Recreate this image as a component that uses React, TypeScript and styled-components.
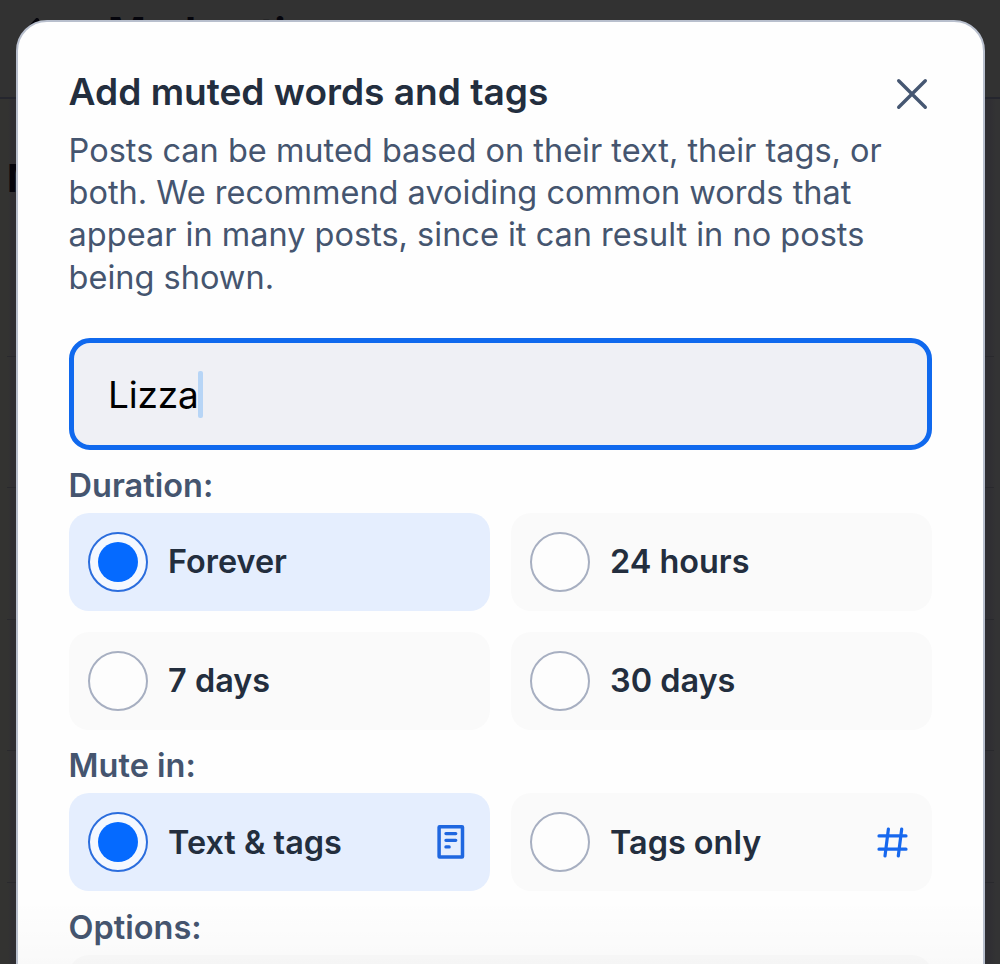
import React from "react";
import styled, { createGlobalStyle } from "styled-components";

const Global = createGlobalStyle`
  * { box-sizing: border-box; }
  html, body { margin: 0; padding: 0; overflow: hidden; }
  body { font-family: Inter, "Liberation Sans", sans-serif; background: #323232; }
`;

const Screen = styled.div`
  position: relative;
  width: 1000px;
  height: 964px;
  overflow: hidden;
  background: linear-gradient(to right, #333331 0, #333331 8px, #302f33 12px, #302f33 990px, #333334 996px);
`;

const PageBehind = styled.div`
  display: flex;
  flex-direction: column;
  height: 964px;
`;

const PageHeader = styled.header`
  display: flex;
  align-items: center;
  gap: 68px;
  height: 99px;
  padding: 0 0 40px 20px;
  border-bottom: 2px solid #25262e;
  color: #05050c;
  background: #323232;
  flex: none;
`;

const BackArrow = styled.svg`
  margin-top: 12px;
`;

const PageTitle = styled.span`
  font-size: 40.5px;
  line-height: 50px;
  padding-top: 8px;
  font-weight: 700;
`;

const PageSection = styled.div`
  flex: none;
  height: 258px;
  margin: 0 6px 0 7px;
  padding-top: 54px;
  font-size: 38px;
  line-height: 50px;
  font-weight: 700;
  color: #05050c;
  border-bottom: 1px solid #29292d;
`;

const PageRow = styled.div`
  flex: none;
  height: 131.4px;
  margin: 0 6px 0 7px;
  border-bottom: 1px solid #29292d;
`;

const Dialog = styled.section`
  position: absolute;
  left: 16px;
  top: 20px;
  width: 969px;
  height: 1100px;
  padding: 50px 51px 50px 50.6px;
  border: 2px solid #b8bfcd;
  border-radius: 31px;
  background: #fefefe;
`;

const TitleRow = styled.div`
  display: flex;
  justify-content: space-between;
  align-items: center;
  height: 44px;
`;

const Title = styled.h1`
  margin: 0;
  padding-bottom: 4px;
  font-size: 37.1px;
  line-height: 44px;
  font-weight: 600;
  letter-spacing: 0;
  color: #232e3e;
  white-space: nowrap;
`;

const CloseButton = styled.button`
  display: flex;
  padding: 0;
  margin: 0 3.4px 0 0;
  border: 0;
  background: none;
  color: #465772;
`;

const Description = styled.p`
  margin: 14px 0 0;
  font-size: 32.5px;
  line-height: 42.2px;
  letter-spacing: 0;
  color: #45556f;
  white-space: nowrap;
`;

const InputBox = styled.div`
  display: flex;
  align-items: center;
  height: 112px;
  margin-top: 39px;
  padding: 0 34.5px;
  border: 5px solid #1069ee;
  border-radius: 21px;
  background: #eff0f5;
  font-size: 37px;
  line-height: 48px;
  letter-spacing: 0;
  color: #000;
`;

const InputText = styled.span`
  padding-top: 2px;
  letter-spacing: -0.2px;
`;

const Caret = styled.span`
  width: 5px;
  height: 47px;
  margin: 1px 0 0 -1px;
  border-radius: 2px;
  background: #b7d5f6;
`;

const GroupLabel = styled.h2<{ $top: number }>`
  margin: ${(p) => p.$top}px 0 0;
  height: 42px;
  font-size: 32.5px;
  line-height: 42px;
  font-weight: 600;
  letter-spacing: 0;
  color: #45556f;
`;

const OptionGrid = styled.div`
  display: grid;
  grid-template-columns: 1fr 1fr;
  gap: 20.5px;
  margin-top: 5.8px;
`;

const Option = styled.label<{ $selected?: boolean; $wide?: boolean }>`
  display: flex;
  align-items: center;
  grid-column: ${(p) => (p.$wide ? "1 / -1" : "auto")};
  height: 98.5px;
  padding: 0 24px 0 19.5px;
  gap: 20px;
  border-radius: 20px;
  background: ${(p) => (p.$selected ? "#e5eefe" : "#fafafa")};
`;

const Radio = styled.span<{ $selected?: boolean }>`
  display: flex;
  align-items: center;
  justify-content: center;
  flex: none;
  width: 60px;
  height: 60px;
  border: 2.4px solid ${(p) => (p.$selected ? "#2b6ddd" : "#a7afc1")};
  border-radius: 50%;
  background: ${(p) => (p.$selected ? "#f4f8ff" : "#fdfdfd")};
`;

const RadioDot = styled.span`
  width: 40px;
  height: 40px;
  border-radius: 50%;
  background: #056aff;
`;

const OptionText = styled.span`
  flex: 1;
  padding-top: 1px;
  font-size: 32.4px;
  line-height: 42px;
  font-weight: 600;
  letter-spacing: 0;
  color: #232e3e;
  white-space: nowrap;
`;

const BottomFade = styled.div`
  position: absolute;
  left: 18px;
  top: 900px;
  width: 965px;
  height: 64px;
  background: linear-gradient(to bottom, rgba(0, 0, 0, 0), rgba(0, 0, 0, 0.02));
`;

const PageIcon = () => (
  <svg width="29" height="34" viewBox="0 0 29 34" fill="none" stroke="#1f67e0" strokeLinecap="round">
    <rect x="2.1" y="1.8" width="23.4" height="30.2" rx="0.5" strokeWidth="3.5" strokeLinejoin="round" />
    <path d="M8.9 8.6H18.8M8.9 15.3H18.8M8.9 21.9H12.2" strokeWidth="3.2" />
  </svg>
);

const HashIcon = () => (
  <svg width="31" height="31" viewBox="0 0 31 31" fill="none" stroke="#1768ee" strokeWidth="3.2" strokeLinecap="round">
    <path d="M2 8.9H29M2 22.2H29M11.4 2L8 29M24.7 2L21.3 29" />
  </svg>
);

type ChoiceProps = { label: string; selected?: boolean; icon?: React.ReactNode };

const Choice = ({ label, selected, icon }: ChoiceProps) => (
  <Option $selected={selected}>
    <Radio $selected={selected}>{selected && <RadioDot />}</Radio>
    <OptionText>{label}</OptionText>
    {icon}
  </Option>
);

export default function App() {
  return (
    <>
      <Global />
      <Screen>
        <PageBehind aria-hidden="true">
          <PageHeader>
            <BackArrow width="20" height="34" viewBox="0 0 20 34" fill="none" stroke="currentColor" strokeWidth="4" strokeLinecap="round">
              <path d="M17 2L3 17l14 15" />
            </BackArrow>
            <PageTitle>Moderation</PageTitle>
          </PageHeader>
          <PageSection>M</PageSection>
          <PageRow />
          <PageRow />
          <PageRow />
          <PageRow />
        </PageBehind>
        <Dialog>
          <TitleRow>
            <Title>Add muted words and tags</Title>
            <CloseButton aria-label="Close">
              <svg width="34" height="34" viewBox="0 0 34 34" fill="none" stroke="currentColor" strokeWidth="3.4" strokeLinecap="round">
                <path d="M3.7 3.7L30.3 30.3M30.3 3.7L3.7 30.3" />
              </svg>
            </CloseButton>
          </TitleRow>
          <Description>
            Posts can be muted based on their text, their tags, or
            <br />
            both. We recommend avoiding common words that
            <br />
            appear in many posts, since it can result in no posts
            <br />
            being shown.
          </Description>
          <InputBox>
            <InputText>Lizza</InputText>
            <Caret />
          </InputBox>
          <GroupLabel $top={15}>Duration:</GroupLabel>
          <OptionGrid>
            <Choice label="Forever" selected />
            <Choice label="24 hours" />
            <Choice label="7 days" />
            <Choice label="30 days" />
          </OptionGrid>
          <GroupLabel $top={15}>Mute in:</GroupLabel>
          <OptionGrid>
            <Choice label="Text & tags" selected icon={<PageIcon />} />
            <Choice label="Tags only" icon={<HashIcon />} />
          </OptionGrid>
          <GroupLabel $top={15.6}>Options:</GroupLabel>
          <OptionGrid>
            <Option $wide />
          </OptionGrid>
        </Dialog>
        <BottomFade />
      </Screen>
    </>
  );
}
